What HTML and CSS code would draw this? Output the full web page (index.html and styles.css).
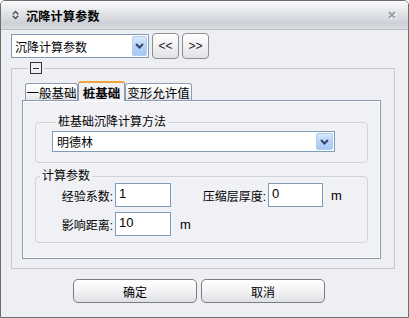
FILE: index.html
```html
<!DOCTYPE html>
<html>
	<head>
		<meta charset="utf-8">
		<title>沉降计算参数</title>
		<link rel="stylesheet" href="styles.css">
	</head>
	<body>
		<div class="window">
			<div class="titlebar">
				<svg class="ticon" width="7" height="10" viewBox="0 0 7 10"><path d="M0.8 4.2 L3.5 1.5 L6.2 4.2 M0.8 5.8 L3.5 8.5 L6.2 5.8" fill="none" stroke="#4a4a4a" stroke-width="1.3"/></svg>
				<span class="title">沉降计算参数</span>
				<svg class="close" width="9" height="9" viewBox="0 0 9 9">
					<path d="M2 2 L8 8 M8 2 L2 8" stroke="#fff" stroke-width="2"/>
					<path d="M1 1 L7 7 M7 1 L1 7" stroke="#9ca0a7" stroke-width="2"/>
				</svg>
			</div>
			<div class="content">
				<div class="toprow">
					<div class="combo wide">
						<span class="value">沉降计算参数</span>
						<span class="drop"><svg width="9" height="6" viewBox="0 0 9 6"><path d="M1 1 L4.5 4.5 L8 1" fill="none" stroke="#34466b" stroke-width="2"/></svg></span>
					</div>
					<button class="nav">&lt;&lt;</button>
					<button class="nav">&gt;&gt;</button>
				</div>
				<fieldset class="outer">
					<legend><span class="collapse"></span></legend>
					<div class="tabs">
						<div class="tab first">一般基础</div>
						<div class="tab active">桩基础</div>
						<div class="tab last">变形允许值</div>
					</div>
					<div class="panel">
						<fieldset class="group">
							<legend>桩基础沉降计算方法</legend>
							<div class="combo method">
								<span class="value">明德林</span>
								<span class="drop"><svg width="9" height="6" viewBox="0 0 9 6"><path d="M1 1 L4.5 4.5 L8 1" fill="none" stroke="#34466b" stroke-width="2"/></svg></span>
							</div>
						</fieldset>
						<fieldset class="group params-group">
							<legend>计算参数</legend>
							<div class="params">
								<label>经验系数:</label>
								<input type="text" value="1">
								<label class="second">压缩层厚度:</label>
								<input type="text" class="short" value="0">
								<span class="unit">m</span>
								<label>影响距离:</label>
								<input type="text" value="10">
								<span class="unit near">m</span>
							</div>
						</fieldset>
					</div>
				</fieldset>
				<div class="actions">
					<button class="btn">确定</button>
					<button class="btn">取消</button>
				</div>
			</div>
		</div>
	</body>
</html>
```

FILE: styles.css
```css
* {
	box-sizing: border-box;
}
html {
	background: #fff;
}
body {
	margin: 0;
	font: 12px "Liberation Sans", "Noto Sans CJK SC", sans-serif;
	color: #000;
}
.window {
	width: 409px;
	height: 318px;
	border: 1px solid #6c6d70;
	border-radius: 5px 5px 0 0;
	background: #eeeff3;
	overflow: hidden;
}
.titlebar {
	height: 29px;
	display: flex;
	align-items: center;
	padding: 0 11px 0 11px;
	background: linear-gradient(#fbfbfc, #e6e8eb 35%, #cdd0d6 80%, #d9dbdf);
	border-bottom: 1px solid #b9bcc2;
}
.ticon {
	display: block;
}
.title {
	margin-left: 7px;
	font-weight: bold;
	font-size: 12px;
	letter-spacing: 0.3px;
}
.close {
	margin-left: auto;
	display: block;
}
.content {
	padding: 0 13px 0 10px;
}
.toprow {
	display: flex;
	align-items: center;
	gap: 3px;
	height: 26px;
	margin-top: 3px;
}
.combo {
	display: flex;
	align-items: center;
	background: #fff;
	border: 1px solid #7f9db9;
}
.combo .value {
	flex-grow: 1;
	padding-left: 3px;
}
.combo .drop {
	display: flex;
	align-items: center;
	justify-content: center;
	background: linear-gradient(#d6e8fd, #b7d4f8 50%, #a6c8f3);
	border: 1px solid #b1cdee;
	border-radius: 2px;
}
.combo.wide {
	width: 138px;
	height: 24px;
}
.combo.wide .drop {
	width: 15px;
	height: 20px;
	margin-right: 1px;
}
.nav {
	width: 27px;
	height: 26px;
	padding: 0;
	border: 1px solid #8d8e92;
	border-radius: 4px;
	background: linear-gradient(#ffffff, #f1f1f4 50%, #e2e3e8);
	font: 12px "Liberation Sans", sans-serif;
	color: #222;
}
fieldset {
	margin: 0;
	min-width: 0;
}
.outer {
	margin-top: 3px;
	padding: 7px 13px 9px 10px;
	border: 1px solid #c8c9cf;
}
.outer > legend {
	padding: 0 2px;
	margin-left: 6px;
}
.collapse {
	display: block;
	width: 12px;
	height: 12px;
	border: 1px solid #333;
	background: linear-gradient(#333, #333) center / 6px 1px no-repeat;
}
.tabs {
	display: flex;
	align-items: flex-end;
	height: 19px;
	padding-left: 3px;
}
.tab {
	height: 17px;
	display: flex;
	align-items: center;
	justify-content: center;
	border: 1px solid #919bb0;
	border-bottom: none;
	border-radius: 3px 3px 0 0;
	background: linear-gradient(#ffffff, #f1f2f5 60%, #e4e6eb);
	font-size: 12.5px;
}
.tab.first {
	width: 53px;
}
.tab.last {
	width: 67px;
}
.tab.active {
	width: 47px;
	height: 20px;
	margin-bottom: -1px;
	position: relative;
	z-index: 1;
	background: #f0f1f5;
	border-top: 2px solid #f3a43b;
	font-weight: bold;
}
.panel {
	border: 1px solid #8d99ae;
	box-shadow: inset 0 0 0 1px #fbfcfe;
	background: #f0f1f5;
	padding: 14px 12px 15px 12px;
}
.group {
	border: 1px solid #d2d3da;
	border-radius: 4px;
	padding: 2px 0 10px 16px;
}
.group > legend {
	margin-left: 4px;
	padding: 0 2px;
	line-height: 14px;
}
.combo.method {
	width: 283px;
	height: 21px;
}
.combo.method .value {
	padding-left: 4px;
}
.combo.method .drop {
	width: 17px;
	height: 17px;
	margin-right: 1px;
}
.params-group {
	margin-top: 6px;
	padding: 0 0 6px 0;
}
.params {
	display: grid;
	grid-template-columns: 79px 56px 97px 55px 44px;
	grid-auto-rows: 24px;
	row-gap: 5px;
	align-items: center;
}
.params label {
	text-align: right;
	padding-right: 2px;
}
.params input {
	height: 24px;
	width: 100%;
	border: 1px solid #7f9db9;
	background: #fff;
	padding: 0 3px 4px 3px;
	font: 13px "Liberation Sans", sans-serif;
	outline: none;
}
.unit {
	padding-left: 8px;
	font: 13px "Liberation Sans", sans-serif;
}
.unit.near {
	padding-left: 9px;
}
.actions {
	display: flex;
	gap: 4px;
	margin-top: 10px;
	padding-left: 62px;
}
.btn {
	width: 124px;
	height: 24px;
	border: 1px solid #7c7d82;
	border-radius: 5px;
	background: linear-gradient(#ffffff, #f3f3f5 50%, #dfe0e4);
	font: 12px "Liberation Sans", "Noto Sans CJK SC", sans-serif;
	color: #000;
}
```
